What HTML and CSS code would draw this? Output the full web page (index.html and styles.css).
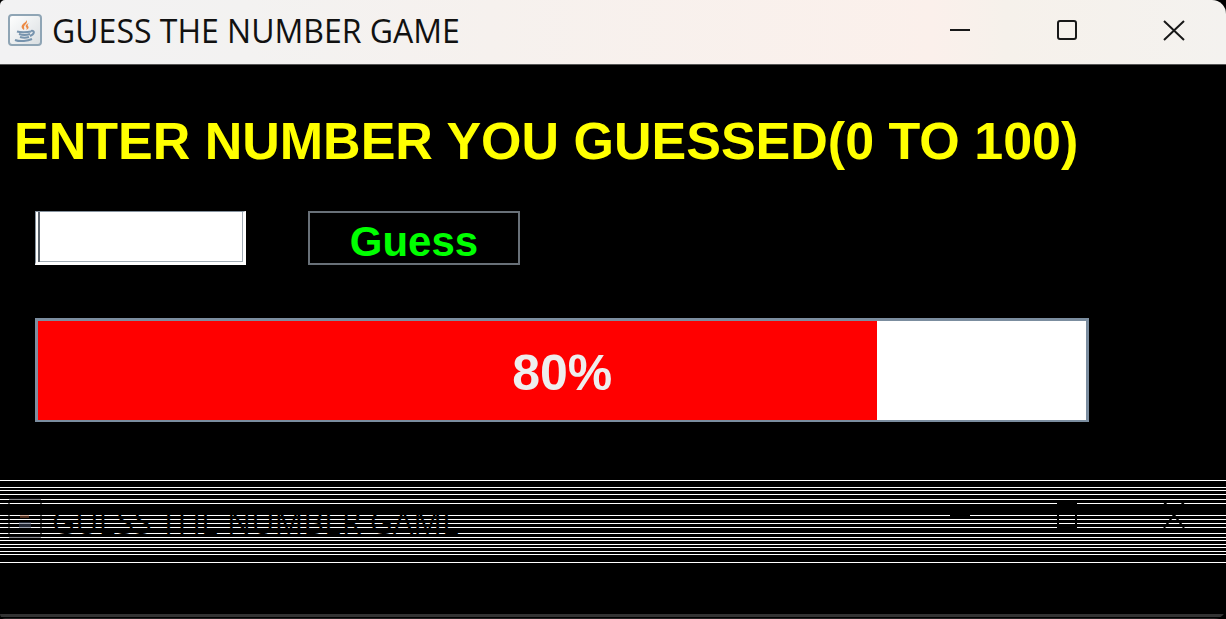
FILE: index.html
```html
<!DOCTYPE html>
<html lang="en">
<head>
<meta charset="utf-8">
<meta name="viewport" content="width=device-width, initial-scale=1">
<title>GUESS THE NUMBER GAME</title>
<link rel="stylesheet" href="styles.css">
</head>
<body>
<div class="window">
  <header class="titlebar">
    <svg class="app-icon" viewBox="0 0 34 32" aria-hidden="true">
      <defs><linearGradient id="tile" x1="0" y1="0" x2="1" y2="1"><stop offset="0" stop-color="#fff"/><stop offset="1" stop-color="#d9dee1"/></linearGradient></defs>
      <rect x="1" y="1" width="32" height="30" rx="3" fill="url(#tile)" stroke="#8fa5b5" stroke-width="2"/>
      <path d="M18 5c2 2-1 3-3 5s-2 4 1 6c1-2-1-3 1-5s3-4 1-6zM21 9c-3 1-4 3-3 4s1 2 0 3c3-1 3-3 2-4s0-2 1-3z" fill="#ec8a45"/>
      <path d="M9 17.500c3 1 10 1 14 0M11 20c3 1 8 1 11 0M12 23c3 1 6 1 9 0M7 26c5 2 13 1 17-1" fill="none" stroke="#7794ae" stroke-width="2"/>
      <path d="M23 17c4-1 4 3-1 5" fill="none" stroke="#7794ae" stroke-width="2"/>
    </svg>
    <div class="title">GUESS THE NUMBER GAME</div>
    <div class="controls">
      <button class="control" type="button" aria-label="Minimize"><svg viewBox="0 0 24 24"><path d="M2 12h20"/></svg></button>
      <button class="control" type="button" aria-label="Maximize"><svg viewBox="0 0 24 24"><rect x="3" y="3" width="18" height="18" rx="2"/></svg></button>
      <button class="control" type="button" aria-label="Close"><svg viewBox="0 0 24 24"><path d="M2 3l20 19M22 3L2 22"/></svg></button>
    </div>
  </header>
  <main class="content">
    <label class="prompt" for="guess">ENTER NUMBER YOU GUESSED(0 TO 100)</label>
    <div class="entry">
      <input class="guess-input" id="guess" type="text">
      <button class="guess-button" type="button">Guess</button>
    </div>
    <div class="progress" role="progressbar" aria-label="Closeness" aria-valuemin="0" aria-valuemax="100" aria-valuenow="80">
      <div class="fill" style="width:80%"></div>
      <span class="percent">80%</span>
    </div>
  </main>
  <div class="scanlines" aria-hidden="true">
    <svg class="app-icon" viewBox="0 0 34 40"><path d="M1 2v36M33 2v36" stroke="#000" stroke-opacity=".6" stroke-width="2"/><path d="M1 1h32M1 39h32" stroke="#181820" stroke-width="1"/><path d="M11 24h12v6H11z" fill="#45506a" opacity=".5"/><path d="M12 17h9v3h-9z" fill="#a05a38" opacity=".5"/></svg>
    <div class="title">GUESS THE NUMBER GAME</div>
    <div class="controls">
      <span class="control"><svg viewBox="0 0 24 30"><path d="M2 16h20"/></svg></span>
      <span class="control"><svg viewBox="0 0 24 30"><rect x="3" y="4" width="18" height="24"/></svg></span>
      <span class="control"><svg viewBox="0 0 24 30"><path d="M2 3l10 12L22 3M2 29l10-13 10 13"/></svg></span>
    </div>
  </div>
  <footer class="window-edge"></footer>
</div>
</body>
</html>
```
FILE: styles.css
```css
* { box-sizing: border-box; }
body { margin: 0; background: #000; font-family: "Liberation Sans", Arial, sans-serif; }
.window { min-height: 100vh; display: flex; flex-direction: column; background: #000; overflow: hidden; border-radius: 5px 14px 12px 5px; }
.titlebar, .scanlines { display: flex; align-items: center; padding: 0 0 0 8px; gap: 10px; }
.titlebar { height: 65px; padding-bottom: 5px; border-bottom: 1px solid #555; background: linear-gradient(90deg, #f2f2f3 0%, #f3f2f1 20%, #f6f1ee 40%, #fbf0eb 76%, #f6f1eb 82%, #f4f2ef 100%); }
.app-icon { width: 34px; height: 32px; flex: none; }
.title { flex: 1; font: 32px/40px "Open Sans", "Noto Sans", sans-serif; color: #111; white-space: nowrap; padding-top: 2px; }
.controls { display: flex; margin-right: -1px; }
.control { width: 107px; height: 58px; display: grid; place-items: center; border: 0; padding: 0; background: none; }
.control svg { width: 24px; height: 24px; fill: none; stroke: #181818; stroke-width: 2; }
.content { display: flex; flex-direction: column; align-items: flex-start; padding: 46px 0 58px; }
.prompt { padding-left: 14px; font-size: 52px; line-height: 60px; font-weight: 700; color: #ff0; white-space: nowrap; }
.entry { display: flex; gap: 62px; padding: 40px 0 0 35px; }
.guess-input { width: 211px; height: 54px; border: 3px solid #fff; border-top: 1px solid #84919d; border-left: 1px solid #84919d; border-radius: 0; background: #fff; box-shadow: inset 2px 0 0 #fff, inset 4px 0 0 #59616a, inset -1px -1px 0 #a2acb5; padding: 0 8px; font: 700 40px/50px "Liberation Sans", Arial, sans-serif; outline: 0; }
.guess-button { width: 212px; height: 54px; border: 2px solid #687078; background: #000; color: #0f0; font: 700 42px/46px "Liberation Sans", Arial, sans-serif; padding: 6px 0 0; }
.progress { position: relative; width: 86%; height: 104px; margin: 53px 0 0 35px; border: 3px solid #7b8d9f; border-bottom-width: 2px; background: #fff; display: grid; }
.fill { grid-area: 1 / 1; background: #f00; }
.percent { grid-area: 1 / 1; place-self: center; padding-top: 4px; font-size: 50px; line-height: 58px; font-weight: 700; color: #eee; }
.scanlines { height: 83px; color: #000; background: linear-gradient(#fff 0 1px, #000 1px 7px, #fff 7px 8px, #000 8px 10px, #fff 10px 11px, #000 11px 14px, #fff 14px 15px, #000 15px 19px, #fff 19px 20px, #000 20px 23px, #fff 23px 24px, #000 24px 35px, #fff 35px 36px, #000 36px 39px, #fff 39px 40px, #000 40px 43px, #fff 43px 44px, #000 44px 47px, #fff 47px 48px, #000 48px 53px, #fff 53px 54px, #000 54px 57px, #fff 57px 58px, #000 58px 60px, #fff 60px 61px, #000 61px 64px, #fff 64px 65px, #000 65px 67px, #fff 67px 68px, #000 68px 71px, #fff 71px 72px, #000 72px 74px, #fff 74px 75px, #000 75px 82px, #fff 82px 83px); }
.scanlines .app-icon { height: 40px; margin-bottom: 7px; }
.scanlines .title { color: #000; padding-top: 0; }
.scanlines .control { height: 83px; padding-bottom: 15px; }
.scanlines .control svg { height: 30px; stroke: #000; }
.window-edge { margin-top: auto; height: 5px; border-top: 3px solid #333; border-bottom: 1px solid #222; background: #000; }
```
